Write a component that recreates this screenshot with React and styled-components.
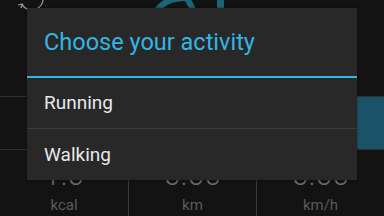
import React from "react";
import styled, { createGlobalStyle } from "styled-components";

const GlobalStyle = createGlobalStyle`
  html, body { margin: 0; padding: 0; background: #121212; }
  body { font-family: Roboto, "Noto Sans", sans-serif; }
`;

const Screen = styled.div`
  position: relative;
  width: 384px;
  height: 216px;
  overflow: hidden;
  background: #131313;
  display: flex;
  flex-direction: column;
`;

const Header = styled.div`
  height: 96px;
  display: flex;
  align-items: flex-start;
`;

const Segments = styled.div`
  height: 52px;
  display: grid;
  grid-template-columns: repeat(3, 1fr);
  border-top: 1px solid #2f2f2f;
  border-bottom: 1px solid #2f2f2f;
`;

const Segment = styled.div`
  background: ${(p) => (p.$active ? "#1a5368" : "transparent")};
`;

const Spacer = styled.div`
  flex: 1;
`;

const Stats = styled.div`
  height: 56px;
  display: grid;
  grid-template-columns: repeat(3, 1fr);
`;

const Stat = styled.div`
  display: flex;
  flex-direction: column;
  align-items: center;
  border-left: ${(p) => (p.$first ? "none" : "1px solid #3a3a3a")};
`;

const StatValue = styled.div`
  font-size: 30px;
  line-height: 30px;
  font-weight: 300;
  color: #6a6a6a;
`;

const StatLabel = styled.div`
  margin-top: 6px;
  font-size: 15px;
  line-height: 18px;
  color: #5a5a5a;
`;

const Dialog = styled.div`
  position: absolute;
  left: 27px;
  top: 8px;
  width: 330px;
  height: 172px;
  background: #282828;
  box-shadow: 0 0 2px rgba(0, 0, 0, 0.6);
  display: flex;
  flex-direction: column;
`;

const Title = styled.div`
  height: 68px;
  display: flex;
  align-items: center;
  padding-left: 17px;
  font-size: 23.5px;
  color: #33b5e5;
`;

const TitleRule = styled.div`
  height: 2px;
  background: #33b5e5;
`;

const Item = styled.div`
  height: 51px;
  display: flex;
  align-items: center;
  padding-left: 17px;
  font-size: 19px;
  color: #e8e8e8;
  border-top: ${(p) => (p.$divider ? "1px solid #3d3d3d" : "none")};
`;

const RefreshIcon = () => (
  <svg width="40" height="12" viewBox="0 0 40 12" style={{ marginLeft: 10, flex: "none" }}>
    <path d="M12 4 A 10.5 10.5 0 0 0 26 9 A 10.5 10.5 0 0 0 33 -2" fill="none" stroke="#9a9a9a" strokeWidth="1.2" />
    <path d="M8 5 L12 4 L11 8" fill="none" stroke="#9a9a9a" strokeWidth="1.2" />
  </svg>
);

const BigFigure = () => (
  <svg width="100" height="12" viewBox="0 0 100 12" style={{ marginLeft: 102, flex: "none" }}>
    <path d="M4 12 C 10 2, 22 -2, 34 -2 C 38 2, 40 8, 42 12" fill="none" stroke="#1d6479" strokeWidth="6" />
    <rect x="65" y="0" width="7" height="12" fill="#1d6479" />
  </svg>
);

export default function App() {
  return (
    <>
      <GlobalStyle />
      <Screen>
        <Header>
          <RefreshIcon />
          <BigFigure />
        </Header>
        <Segments>
          <Segment />
          <Segment />
          <Segment $active />
        </Segments>
        <Spacer />
        <Stats>
          <Stat $first>
            <StatValue>1.0</StatValue>
            <StatLabel>kcal</StatLabel>
          </Stat>
          <Stat>
            <StatValue>0.00</StatValue>
            <StatLabel>km</StatLabel>
          </Stat>
          <Stat>
            <StatValue>0.00</StatValue>
            <StatLabel>km/h</StatLabel>
          </Stat>
        </Stats>
        <Dialog>
          <Title>Choose your activity</Title>
          <TitleRule />
          <Item>Running</Item>
          <Item $divider>Walking</Item>
        </Dialog>
      </Screen>
    </>
  );
}
